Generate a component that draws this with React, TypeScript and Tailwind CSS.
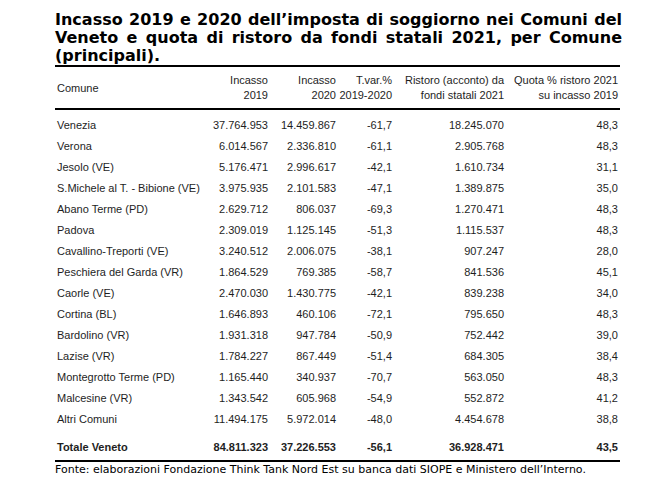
import React from "react";

type Row = [string, string, string, string, string, string];

const rows: Row[] = [
  ["Venezia", "37.764.953", "14.459.867", "-61,7", "18.245.070", "48,3"],
  ["Verona", "6.014.567", "2.336.810", "-61,1", "2.905.768", "48,3"],
  ["Jesolo (VE)", "5.176.471", "2.996.617", "-42,1", "1.610.734", "31,1"],
  ["S.Michele al T. - Bibione (VE)", "3.975.935", "2.101.583", "-47,1", "1.389.875", "35,0"],
  ["Abano Terme (PD)", "2.629.712", "806.037", "-69,3", "1.270.471", "48,3"],
  ["Padova", "2.309.019", "1.125.145", "-51,3", "1.115.537", "48,3"],
  ["Cavallino-Treporti (VE)", "3.240.512", "2.006.075", "-38,1", "907.247", "28,0"],
  ["Peschiera del Garda (VR)", "1.864.529", "769.385", "-58,7", "841.536", "45,1"],
  ["Caorle (VE)", "2.470.030", "1.430.775", "-42,1", "839.238", "34,0"],
  ["Cortina (BL)", "1.646.893", "460.106", "-72,1", "795.650", "48,3"],
  ["Bardolino (VR)", "1.931.318", "947.784", "-50,9", "752.442", "39,0"],
  ["Lazise (VR)", "1.784.227", "867.449", "-51,4", "684.305", "38,4"],
  ["Montegrotto Terme (PD)", "1.165.440", "340.937", "-70,7", "563.050", "48,3"],
  ["Malcesine (VR)", "1.343.542", "605.968", "-54,9", "552.872", "41,2"],
  ["Altri Comuni", "11.494.175", "5.972.014", "-48,0", "4.454.678", "38,8"],
];

const grid = "grid grid-cols-[150px_63px_68px_56px_112px_114px]";

export default function App() {
  return (
    <div className="w-[671px] h-[490px] bg-white pl-[55px] pt-[11px]">
      <div className="w-[567px] font-['DejaVu_Sans',sans-serif] font-bold text-[16px] leading-[18px] text-black">
        <div className="text-justify [text-align-last:justify]">
          Incasso 2019 e 2020 dell’imposta di soggiorno nei Comuni del
        </div>
        <div className="text-justify [text-align-last:justify]">
          Veneto e quota di ristoro da fondi statali 2021, per Comune
        </div>
        <div>(principali).</div>
      </div>
      <div className="w-[565px] font-['Liberation_Sans',Arial,sans-serif] text-[11px] text-[#1e1e1e]">
        <div className={`${grid} border-t-2 border-b-2 border-black pt-[6px] pb-[5px] leading-[15px]`}>
          <div className="self-center pl-[2px]">Comune</div>
          <div className="text-right">Incasso<br />2019</div>
          <div className="text-right">Incasso<br />2020</div>
          <div className="text-right">T.var.%<br />2019-2020</div>
          <div className="text-right">Ristoro (acconto) da<br />fondi statali 2021</div>
          <div className="text-right">Quota % ristoro 2021<br />su incasso 2019</div>
        </div>
        <div className="pt-[5px]">
          {rows.map((r) => (
            <div key={r[0]} className={`${grid} h-[21px] items-center`}>
              <div className="pl-[2px] whitespace-nowrap">{r[0]}</div>
              <div className="text-right">{r[1]}</div>
              <div className="text-right">{r[2]}</div>
              <div className="text-right">{r[3]}</div>
              <div className="text-right">{r[4]}</div>
              <div className="text-right">{r[5]}</div>
            </div>
          ))}
        </div>
        <div className={`${grid} h-[21px] items-center mt-[7px] mb-[2px] font-bold`}>
          <div className="pl-[2px]">Totale Veneto</div>
          <div className="text-right">84.811.323</div>
          <div className="text-right">37.226.553</div>
          <div className="text-right">-56,1</div>
          <div className="text-right">36.928.471</div>
          <div className="text-right">43,5</div>
        </div>
        <div className="border-t-2 border-black" />
      </div>
      <div className="font-['DejaVu_Sans',sans-serif] text-[11px] leading-[13px] text-black pt-[1px]">
        Fonte: elaborazioni Fondazione Think Tank Nord Est su banca dati SIOPE e Ministero dell’Interno.
      </div>
    </div>
  );
}
